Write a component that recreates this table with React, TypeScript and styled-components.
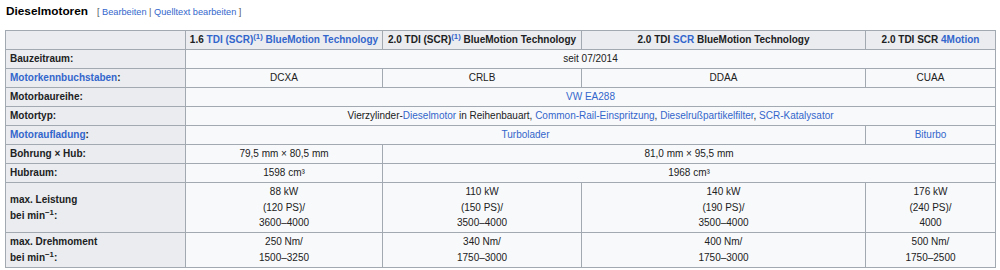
import React from "react";
import styled, { createGlobalStyle } from "styled-components";

const GlobalStyle = createGlobalStyle`
  html, body { margin: 0; padding: 0; background: #ffffff; }
  body { font-family: "Liberation Sans", Arial, Helvetica, sans-serif; color: #222222; }
`;

const Page = styled.div`
  padding: 3px 5px 0 5px;
`;

const TitleBar = styled.div`
  display: flex;
  align-items: baseline;
  gap: 9px;
  margin-bottom: 10px;
  line-height: 16px;
`;

const Title = styled.h2`
  margin: 0;
  padding-left: 1px;
  font-size: 11.8px;
  font-weight: bold;
  color: #000000;
  line-height: 16px;
`;

const EditLinks = styled.span`
  font-size: 9.2px;
  color: #54595d;
  white-space: pre;
`;

const Link = styled.a`
  color: #3366cc;
  text-decoration: none;
  cursor: pointer;
`;

const Table = styled.table`
  border-collapse: collapse;
  table-layout: fixed;
  width: 990px;
  font-size: 10px;
  line-height: 15.5px;
  color: #202122;
`;

const Col = styled.col<{ $w: number }>`
  width: ${(p) => p.$w}px;
`;

const HeadCell = styled.th`
  background: #eaecf0;
  border: 1px solid #a2a9b1;
  padding: 1.25px 3px;
  font-weight: bold;
  text-align: center;
  white-space: nowrap;
  color: #202122;
`;

const RowHead = styled.th`
  background: #eaecf0;
  border: 1px solid #a2a9b1;
  padding: 1.25px 4px;
  font-weight: bold;
  text-align: left;
  vertical-align: middle;
  color: #202122;
`;

const Cell = styled.td`
  background: #f8f9fa;
  border: 1px solid #a2a9b1;
  padding: 1.25px 4px;
  text-align: center;
  vertical-align: middle;
`;

const Sup = styled.sup`
  font-size: 7.8px;
  line-height: 0;
  vertical-align: super;
`;

const colWidths = [180, 197, 199, 284, 130];

type Row = {
  head: React.ReactNode;
  cells: { content: React.ReactNode; span?: number }[];
};

const perMin = (label: string) => (
  <>
    {label}
    <br />
    bei min<Sup>−1</Sup>:
  </>
);

const lines = (...parts: string[]) =>
  parts.map((p, i) => (
    <React.Fragment key={i}>
      {i > 0 && <br />}
      {p}
    </React.Fragment>
  ));

const rows: Row[] = [
  { head: "Bauzeitraum:", cells: [{ content: "seit 07/2014", span: 4 }] },
  {
    head: (
      <>
        <Link>Motorkennbuchstaben</Link>:
      </>
    ),
    cells: [{ content: "DCXA" }, { content: "CRLB" }, { content: "DDAA" }, { content: "CUAA" }],
  },
  { head: "Motorbaureihe:", cells: [{ content: <Link>VW EA288</Link>, span: 4 }] },
  {
    head: "Motortyp:",
    cells: [
      {
        content: (
          <>
            Vierzylinder-<Link>Dieselmotor</Link> in Reihenbauart, <Link>Common-Rail-Einspritzung</Link>,{" "}
            <Link>Dieselrußpartikelfilter</Link>, <Link>SCR-Katalysator</Link>
          </>
        ),
        span: 4,
      },
    ],
  },
  {
    head: (
      <>
        <Link>Motoraufladung</Link>:
      </>
    ),
    cells: [
      { content: <Link>Turbolader</Link>, span: 3 },
      { content: <Link>Biturbo</Link> },
    ],
  },
  {
    head: "Bohrung × Hub:",
    cells: [{ content: "79,5 mm × 80,5 mm" }, { content: "81,0 mm × 95,5 mm", span: 3 }],
  },
  {
    head: "Hubraum:",
    cells: [{ content: "1598 cm³" }, { content: "1968 cm³", span: 3 }],
  },
  {
    head: perMin("max. Leistung"),
    cells: [
      { content: lines("88 kW", "(120 PS)/", "3600–4000") },
      { content: lines("110 kW", "(150 PS)/", "3500–4000") },
      { content: lines("140 kW", "(190 PS)/", "3500–4000") },
      { content: lines("176 kW", "(240 PS)/", "4000") },
    ],
  },
  {
    head: perMin("max. Drehmoment"),
    cells: [
      { content: lines("250 Nm/", "1500–3250") },
      { content: lines("340 Nm/", "1750–3000") },
      { content: lines("400 Nm/", "1750–3000") },
      { content: lines("500 Nm/", "1750–2500") },
    ],
  },
];

export default function App() {
  return (
    <>
      <GlobalStyle />
      <Page>
        <TitleBar>
          <Title>Dieselmotoren</Title>
          <EditLinks>
            [ <Link>Bearbeiten</Link> | <Link>Quelltext bearbeiten</Link> ]
          </EditLinks>
        </TitleBar>
        <Table>
          <colgroup>
            {colWidths.map((w, i) => (
              <Col key={i} $w={w} />
            ))}
          </colgroup>
          <thead>
            <tr>
              <HeadCell />
              <HeadCell>
                1.6 <Link>TDI</Link> <Link>(SCR)</Link>
                <Sup>
                  <Link>(1)</Link>
                </Sup>{" "}
                <Link>BlueMotion Technology</Link>
              </HeadCell>
              <HeadCell>
                2.0 TDI (SCR)
                <Sup>
                  <Link>(1)</Link>
                </Sup>{" "}
                BlueMotion Technology
              </HeadCell>
              <HeadCell>
                2.0 TDI <Link>SCR</Link> BlueMotion Technology
              </HeadCell>
              <HeadCell>
                2.0 TDI SCR <Link>4Motion</Link>
              </HeadCell>
            </tr>
          </thead>
          <tbody>
            {rows.map((r, i) => (
              <tr key={i}>
                <RowHead scope="row">{r.head}</RowHead>
                {r.cells.map((c, j) => (
                  <Cell key={j} colSpan={c.span ?? 1}>
                    {c.content}
                  </Cell>
                ))}
              </tr>
            ))}
          </tbody>
        </Table>
      </Page>
    </>
  );
}
